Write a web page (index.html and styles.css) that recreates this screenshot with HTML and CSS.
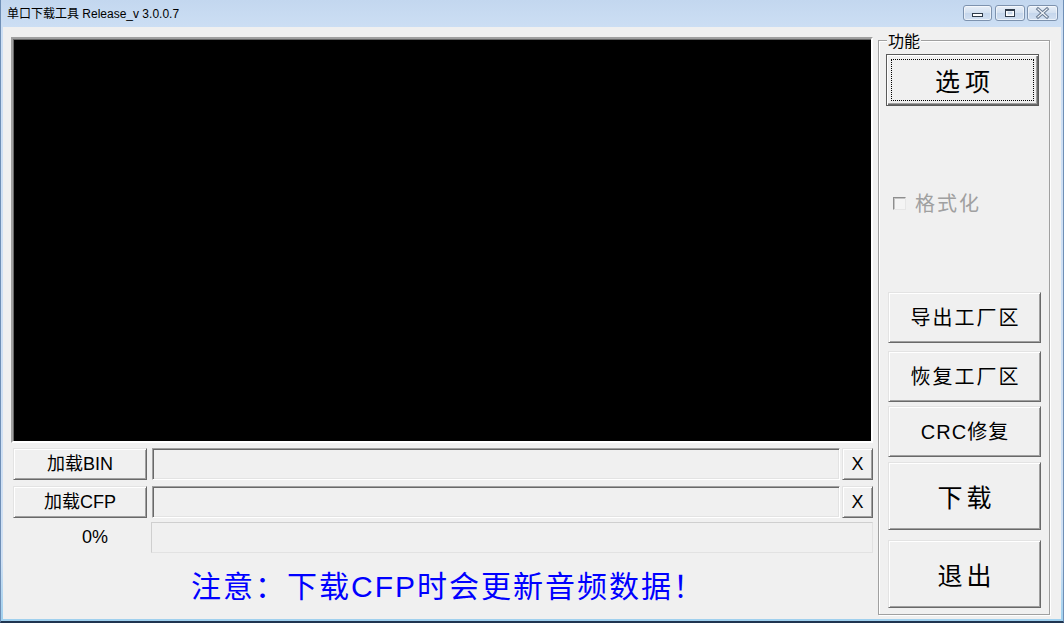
FILE: index.html
```html
<!DOCTYPE html>
<html lang="zh-CN">
<head>
<meta charset="utf-8">
<title>单口下载工具 Release_v 3.0.0.7</title>
<link rel="stylesheet" href="styles.css">
</head>
<body>
<div class="window">
  <div class="titlebar">
    <span class="title">单口下载工具 Release_v 3.0.0.7</span>
    <div class="caps">
      <div class="cap cap-min">
        <svg width="27" height="14" viewBox="0 0 27 14"><rect x="8.5" y="7.5" width="10" height="3" fill="#ffffff" stroke="#2f3b4a"/></svg>
      </div>
      <div class="cap cap-max">
        <svg width="28" height="14" viewBox="0 0 28 14"><rect x="9.5" y="3.5" width="9" height="7" fill="#ffffff" stroke="#2f3b4a"/><line x1="9.5" y1="4.5" x2="18.5" y2="4.5" stroke="#2f3b4a"/><rect x="11.5" y="5.5" width="5" height="3" fill="#c9d8ea" stroke="none"/></svg>
      </div>
      <div class="cap cap-close">
        <svg width="29" height="14" viewBox="0 0 29 14"><path d="M10 3 L19 11 M19 3 L10 11" stroke="#6c7d93" stroke-width="3.2" stroke-linecap="square"/><path d="M10 3 L19 11 M19 3 L10 11" stroke="#f4f7fb" stroke-width="1.2" stroke-linecap="square"/></svg>
      </div>
    </div>
  </div>
  <div class="client">
    <div class="left">
      <div class="screen"></div>
      <div class="row row-bin">
        <div class="btn load">加载BIN</div>
        <div class="field"></div>
        <div class="btn clear">X</div>
      </div>
      <div class="row row-cfp">
        <div class="btn load">加载CFP</div>
        <div class="field"></div>
        <div class="btn clear">X</div>
      </div>
      <div class="row row-progress">
        <div class="percent">0%</div>
        <div class="progress"></div>
      </div>
      <div class="notice">注意：下载CFP时会更新音频数据！</div>
    </div>
    <div class="right">
      <div class="group">
        <span class="group-label">功能</span>
        <div class="btn btn-default opt">选项</div>
        <div class="check-row">
          <span class="checkbox"></span>
          <span class="check-text">格式化</span>
        </div>
        <div class="btn f-btn mid export">导出工厂区</div>
        <div class="btn f-btn mid restore">恢复工厂区</div>
        <div class="btn f-btn mid crc">CRC修复</div>
        <div class="btn f-btn big download">下载</div>
        <div class="btn f-btn big exit">退出</div>
      </div>
    </div>
  </div>
</div>
</body>
</html>
```
FILE: styles.css
```css
html, body {
  margin: 0;
  padding: 0;
}

body {
  width: 1064px;
  height: 623px;
  overflow: hidden;
  font-family: "Liberation Sans", "Noto Sans CJK SC", sans-serif;
  color: #000;
}

.window {
  width: 1064px;
  height: 623px;
  box-sizing: border-box;
  display: flex;
  flex-direction: column;
  background: linear-gradient(#c3d7ef 0px, #cddff4 30px, #cfe0f4 560px, #9fd0ee 620px);
  border-left: 1px solid #6f8fb6;
  border-right: 1px solid #6f8fb6;
  border-bottom: 2px solid #1f3550;
}

.titlebar {
  height: 27px;
  flex: none;
  display: flex;
  justify-content: space-between;
  align-items: flex-start;
}

.title {
  margin: 6px 0 0 6px;
  font-size: 12px;
  line-height: 16px;
  color: #000;
  white-space: nowrap;
}

.caps {
  display: flex;
  margin: 5px 5px 0 0;
}

.cap {
  box-sizing: border-box;
  height: 16px;
  border: 1px solid #7d92ae;
  border-radius: 3px;
  background: linear-gradient(#e8eff8, #d3e0f0 50%, #c5d6ec 51%, #d2e0f1);
  box-shadow: inset 0 0 0 1px rgba(255, 255, 255, 0.55);
  display: flex;
}

.cap svg {
  display: block;
}

.cap-min { width: 29px; }
.cap-max { width: 30px; margin-left: 3px; }
.cap-close { width: 31px; margin-left: 2px; }

.client {
  flex: 1;
  margin: 0 2px 2px 2px;
  background: #f0f0f0;
  display: flex;
  padding: 10px 0 0 8px;
  box-sizing: border-box;
  min-height: 0;
}

.left {
  width: 862px;
  flex: none;
  display: flex;
  flex-direction: column;
}

.screen {
  height: 406px;
  flex: none;
  box-sizing: border-box;
  background: #000;
  border: 2px solid;
  border-color: #a0a0a0 #ffffff #ffffff #a0a0a0;
  box-shadow: inset 1px 1px #696969;
}

.row {
  display: flex;
  flex: none;
  height: 32px;
}

.row-bin { margin-top: 5px; }
.row-cfp { margin-top: 6px; }
.row-progress { margin-top: 4px; height: 31px; }

.btn {
  box-sizing: border-box;
  display: flex;
  align-items: center;
  justify-content: center;
  background: #f0f0f0;
  border: 1px solid;
  border-color: #e3e3e3 #696969 #696969 #e3e3e3;
  box-shadow: inset 1px 1px #ffffff, inset -1px -1px #a0a0a0;
  line-height: 1;
  white-space: nowrap;
  flex: none;
}

.load {
  margin-left: 2px;
  width: 134px;
  font-size: 18px;
}

.field {
  margin-left: 5px;
  width: 688px;
  box-sizing: border-box;
  background: #f0f0f0;
  border: 1px solid;
  border-color: #a0a0a0 #ffffff #ffffff #a0a0a0;
  box-shadow: inset 1px 1px #696969, inset -1px -1px #e3e3e3;
}

.clear {
  margin-left: 2px;
  width: 31px;
  font-size: 18px;
}

.percent {
  width: 140px;
  box-sizing: border-box;
  padding-left: 71px;
  display: flex;
  align-items: center;
  font-size: 18px;
}

.progress {
  flex: 1;
  box-sizing: border-box;
  border: 1px solid;
  border-color: #cfcfcf #e2e2e2 #e2e2e2 #cfcfcf;
  background: #f0f0f0;
}

.notice {
  flex: 1;
  display: flex;
  align-items: center;
  justify-content: center;
  color: #0000ff;
  font-size: 30px;
  letter-spacing: 2px;
  white-space: nowrap;
  padding-bottom: 5px;
  padding-left: 12px;
}

.right {
  margin-left: 5px;
  width: 172px;
  flex: none;
  padding-top: 3px;
}

.group {
  position: relative;
  height: 575px;
  box-sizing: border-box;
  border: 1px solid #a0a0a0;
  box-shadow: inset 1px 1px #ffffff, 1px 1px #ffffff;
  display: flex;
  flex-direction: column;
  align-items: flex-start;
}

.group-label {
  position: absolute;
  top: -10px;
  left: 8px;
  padding: 0 1px;
  background: #f0f0f0;
  font-family: "Noto Sans CJK SC", sans-serif;
  font-size: 16px;
  line-height: 18px;
}

.btn-default {
  position: relative;
  border: 1px solid #5a5a5a;
  box-shadow: inset 1px 1px #ffffff, inset -1px -1px #696969, inset -2px -2px #a0a0a0;
}

.btn-default::after {
  content: "";
  position: absolute;
  left: 4px;
  top: 4px;
  right: 4px;
  bottom: 4px;
  border: 1px dotted #000;
}

.opt {
  margin: 13px 0 0 7px;
  width: 153px;
  height: 52px;
  font-family: "Noto Sans CJK SC", sans-serif;
  font-size: 25px;
  letter-spacing: 5px;
  padding-left: 5px;
}

.check-row {
  margin: 87px 0 0 14px;
  height: 20px;
  display: flex;
  align-items: center;
}

.checkbox {
  width: 13px;
  height: 13px;
  box-sizing: border-box;
  border: 1px solid;
  border-color: #8e8e8e #e6e6e6 #e6e6e6 #8e8e8e;
  background: #f4f4f4;
  box-shadow: inset 1px 1px #c4c4c4;
}

.check-text {
  margin-left: 9px;
  font-family: "Noto Sans CJK SC", sans-serif;
  font-size: 20px;
  line-height: 20px;
  letter-spacing: 2px;
  color: #a0a0a0;
}

.f-btn {
  margin-left: 9px;
  width: 153px;
}

.mid {
  height: 51px;
  font-size: 20px;
  letter-spacing: 2px;
  padding-left: 2px;
}

.big {
  height: 68px;
  font-family: "Noto Sans CJK SC", sans-serif;
  font-size: 25px;
  letter-spacing: 4px;
  padding-left: 4px;
}

.export { margin-top: 79px; }
.restore { margin-top: 8px; }
.crc { margin-top: 4px; letter-spacing: 1px; padding-left: 1px; }
.download { margin-top: 5px; }
.exit { margin-top: 10px; }
```
